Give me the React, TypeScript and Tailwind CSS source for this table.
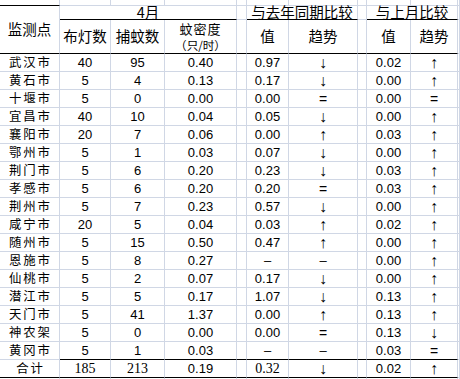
type Row = { name: string; cells: string[]; bold?: boolean };

const rows: Row[] = [
  { name: "武汉市", cells: ["40", "95", "0.40", "0.97", "↓", "0.02", "↑"] },
  { name: "黄石市", cells: ["5", "4", "0.13", "0.17", "↓", "0.00", "↑"] },
  { name: "十堰市", cells: ["5", "0", "0.00", "0.00", "=", "0.00", "="] },
  { name: "宜昌市", cells: ["40", "10", "0.04", "0.05", "↓", "0.00", "↑"] },
  { name: "襄阳市", cells: ["20", "7", "0.06", "0.00", "↑", "0.03", "↑"] },
  { name: "鄂州市", cells: ["5", "1", "0.03", "0.07", "↓", "0.00", "↑"] },
  { name: "荆门市", cells: ["5", "6", "0.20", "0.23", "↓", "0.03", "↑"] },
  { name: "孝感市", cells: ["5", "6", "0.20", "0.20", "=", "0.03", "↑"] },
  { name: "荆州市", cells: ["5", "7", "0.23", "0.57", "↓", "0.00", "↑"] },
  { name: "咸宁市", cells: ["20", "5", "0.04", "0.03", "↑", "0.02", "↑"] },
  { name: "随州市", cells: ["5", "15", "0.50", "0.47", "↑", "0.00", "↑"], bold: true },
  { name: "恩施市", cells: ["5", "8", "0.27", "–", "–", "0.00", "↑"] },
  { name: "仙桃市", cells: ["5", "2", "0.07", "0.17", "↓", "0.00", "↑"] },
  { name: "潜江市", cells: ["5", "5", "0.17", "1.07", "↓", "0.13", "↑"] },
  { name: "天门市", cells: ["5", "41", "1.37", "0.00", "↑", "0.13", "↑"] },
  { name: "神农架", cells: ["5", "0", "0.00", "0.00", "=", "0.13", "↓"] },
  { name: "黄冈市", cells: ["5", "1", "0.03", "–", "–", "0.03", "="] },
];

const head = "font-['Noto_Sans_CJK_SC',sans-serif] text-[14.5px] leading-none";
const cjk = "font-['Noto_Sans_CJK_SC',sans-serif] text-[12.4px] leading-none tracking-[1.8px] pl-[1.8px]";
const num = "font-['Liberation_Sans',Arial,sans-serif] text-[13px] leading-none";
const serif = "font-['Liberation_Serif','Times_New_Roman',serif] text-[14px] leading-none";
const arrow = "font-['Liberation_Sans',Arial,sans-serif] text-[16px] leading-none";

const Cell = ({
  children,
  dark = false,
  className = "",
}: {
  children?: React.ReactNode;
  dark?: boolean;
  className?: string;
}) => (
  <div
    className={`flex items-center justify-center overflow-visible whitespace-nowrap border-r border-b border-r-[#d0d7e5] ${
      dark ? "border-b-black" : "border-b-[#d0d7e5]"
    } ${className}`}
  >
    {children}
  </div>
);

const Trend = ({ v, bold }: { v: string; bold?: boolean }) => {
  if (v === "–") return <span className={num}>–</span>;
  if (v === "=") return <span className={`${num} text-[14px]`}>=</span>;
  return <span className={`${arrow} ${bold ? "font-bold" : ""}`}>{v}</span>;
};

export default function App() {
  return (
    <div className="w-[460px] h-[379px] overflow-hidden bg-white text-black">
      <div className="grid grid-cols-[60px_51px_54px_72px_10px_42px_69px_9px_44px_47px_2px] grid-rows-[6px_14px_34px_repeat(18,18px)_1px]">
        {/* partial row above the table */}
        <Cell dark />
        {Array.from({ length: 10 }).map((_, i) => (
          <Cell key={`t${i}`} />
        ))}

        {/* header row 1 */}
        <Cell dark className="row-span-2">
          <span className={head}>监测点</span>
        </Cell>
        <Cell dark className="col-span-3">
          <span className={head}>4月</span>
        </Cell>
        <Cell />
        <Cell dark className="col-span-2">
          <span className={head}>与去年同期比较</span>
        </Cell>
        <Cell />
        <Cell dark className="col-span-2">
          <span className={head}>与上月比较</span>
        </Cell>
        <Cell />

        {/* header row 2 */}
        <Cell dark>
          <span className={head}>布灯数</span>
        </Cell>
        <Cell dark>
          <span className={head}>捕蚊数</span>
        </Cell>
        <Cell dark className="flex-col">
          <span className="font-['Noto_Sans_CJK_SC',sans-serif] text-[13px] leading-[17px] tracking-[1px]">
            蚊密度
          </span>
          <span className="font-['Noto_Sans_CJK_SC',sans-serif] text-[11.6px] leading-[17px]">
            （只/时）
          </span>
        </Cell>
        <Cell dark />
        <Cell dark>
          <span className={head}>值</span>
        </Cell>
        <Cell dark>
          <span className={head}>趋势</span>
        </Cell>
        <Cell dark />
        <Cell dark>
          <span className={head}>值</span>
        </Cell>
        <Cell dark>
          <span className={head}>趋势</span>
        </Cell>
        <Cell />

        {/* city rows */}
        {rows.map((r, i) => {
          const last = i === rows.length - 1;
          const [lamps, caught, density, yv, yt, mv, mt] = r.cells;
          return [
            <Cell key={`${i}a`}>
              <span className={cjk}>{r.name}</span>
            </Cell>,
            <Cell key={`${i}b`} dark={last}>
              <span className={num}>{lamps}</span>
            </Cell>,
            <Cell key={`${i}c`} dark={last}>
              <span className={num}>{caught}</span>
            </Cell>,
            <Cell key={`${i}d`} dark={last}>
              <span className={num}>{density}</span>
            </Cell>,
            <Cell key={`${i}e`} dark={last} />,
            <Cell key={`${i}f`} dark={last}>
              <span className={num}>{yv}</span>
            </Cell>,
            <Cell key={`${i}g`} dark={last}>
              <Trend v={yt} bold={r.bold} />
            </Cell>,
            <Cell key={`${i}h`} dark={last} />,
            <Cell key={`${i}i`} dark={last}>
              <span className={num}>{mv}</span>
            </Cell>,
            <Cell key={`${i}j`} dark={last}>
              <Trend v={mt} />
            </Cell>,
            <Cell key={`${i}k`} />,
          ];
        })}

        {/* total row */}
        <Cell dark>
          <span className={cjk}>合计</span>
        </Cell>
        <Cell dark>
          <span className={serif}>185</span>
        </Cell>
        <Cell dark>
          <span className={serif}>213</span>
        </Cell>
        <Cell dark>
          <span className={num}>0.19</span>
        </Cell>
        <Cell dark />
        <Cell dark>
          <span className={serif}>0.32</span>
        </Cell>
        <Cell dark>
          <Trend v="↓" />
        </Cell>
        <Cell dark />
        <Cell dark>
          <span className={num}>0.02</span>
        </Cell>
        <Cell dark>
          <Trend v="↑" />
        </Cell>
        <Cell />

        {/* sliver of the next row */}
        {Array.from({ length: 11 }).map((_, i) => (
          <div key={`z${i}`} className="border-r border-r-[#d0d7e5]" />
        ))}
      </div>
    </div>
  );
}
